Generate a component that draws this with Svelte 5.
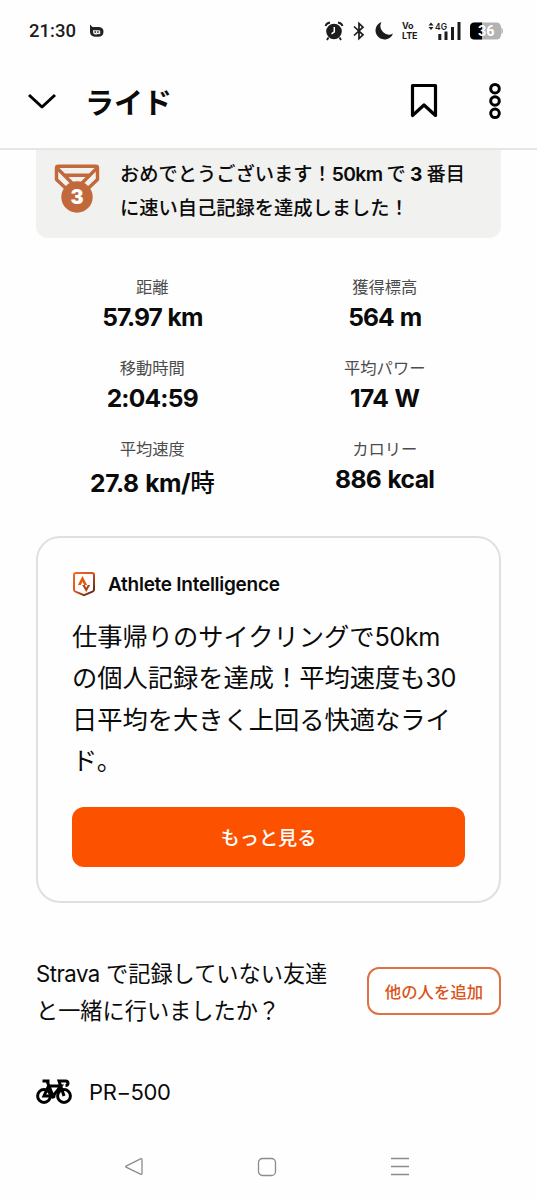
<script>
  const stats = [
    { label: '距離', value: '57.97 km', spacing: -1 },
    { label: '獲得標高', value: '564 m', spacing: -0.9 },
    { label: '移動時間', value: '2:04:59', spacing: -0.8 },
    { label: '平均パワー', value: '174 W', spacing: -0.6 },
    { label: '平均速度', value: '27.8 km/', unit: '時', spacing: -0.4 },
    { label: 'カロリー', value: '886 kcal', spacing: -0.6 },
  ];
</script>

<div class="screen">
  <div class="status">
    <span class="clock">21:30</span>
    <svg class="notif" width="16" height="14" viewBox="0 0 16 14">
      <path d="M1 0.5 L3.5 3 H10 Q14.500 3.500 14.500 7.500 Q14.500 12.800 9 12.800 H6 Q1 12.500 1 7.500 Z" fill="#222" />
      <path d="M4 6.200 H10 Q11.200 6.200 11.200 7.500 V10.500 H6 Q4 10.300 4 8 Z" fill="#eee" />
      <path d="M5.500 8 H7 M8.200 8 H9.700 M8 11 H12" stroke="#222" stroke-width="1.400" />
    </svg>
    <div class="indicators">
      <svg width="20" height="20" viewBox="0 0 20 20">
        <circle cx="10" cy="10.500" r="7.800" fill="#1c1c1c" />
        <path d="M1.500 5 Q2.500 2 6 1.500 M18.500 5 Q17.500 2 14 1.500 M4.500 16.500 L3 19 M15.500 16.500 L17 19" stroke="#1c1c1c" stroke-width="1.800" fill="none" />
        <path d="M10.300 6 V10.800 L7.500 12.800" stroke="#fff" stroke-width="1.500" fill="none" />
      </svg>
      <svg class="bluetooth" width="12" height="20" viewBox="0 0 12 20">
        <path d="M1 5.500 L10 13.800 L6 17.500 V2.500 L10 6.200 L1 14.500" stroke="#1c1c1c" stroke-width="1.700" fill="none" />
      </svg>
      <svg class="moon" width="20" height="20" viewBox="0 0 20 20">
        <path d="M7.500 1 A9 9 0 1 0 19 12.500 A8.500 8.500 0 0 1 7.500 1 Z" fill="#1c1c1c" />
      </svg>
      <div class="volte"><span>Vo</span><span>LTE</span></div>
      <svg class="signal" width="34" height="20" viewBox="0 0 34 20">
        <path d="M0.500 4.500 L3 1.500 L5.500 4.500 Z M0.500 6 L3 9 L5.500 6 Z" fill="#1c1c1c" />
        <text x="7" y="8.800" font-size="9.500" font-weight="600" textLength="12" lengthAdjust="spacingAndGlyphs" fill="#1c1c1c">4G</text>
        <path d="M11.800 13 V19 M18 10.500 V19 M24.500 6 V19 M31 1 V19" stroke="#1c1c1c" stroke-width="3" />
      </svg>
      <svg class="battery" width="34" height="18" viewBox="0 0 34 18">
        <rect x="0" y="0.500" width="31" height="17" rx="4.500" fill="#b3b3b3" />
        <path d="M12 0.500 H4.500 Q0 0.500 0 5 V13 Q0 17.500 4.500 17.500 H12 Z" fill="#000" />
        <path d="M31.300 5.500 Q33 6 33 9 Q33 12 31.300 12.500 Z" fill="#b3b3b3" />
        <text x="8" y="14" font-size="14" font-weight="700" textLength="16.500" lengthAdjust="spacingAndGlyphs" fill="#fff">36</text>
      </svg>
    </div>
  </div>

  <header>
    <svg class="chevron" width="30" height="18" viewBox="0 0 30 18">
      <path d="M2 3 L15 15 L28 3" stroke="#000" stroke-width="3" fill="none" stroke-linejoin="round" />
    </svg>
    <h1>ライド</h1>
    <svg class="bookmark" width="28" height="36" viewBox="0 0 28 36">
      <path d="M2.500 2.500 H25.500 V32.500 L14 22 L2.500 32.500 Z" stroke="#000" stroke-width="3.200" fill="none" stroke-linejoin="round" />
    </svg>
    <svg class="more" width="12" height="38" viewBox="0 0 12 38">
      <g fill="none" stroke="#000" stroke-width="3">
        <circle cx="6" cy="6.700" r="4.300" />
        <circle cx="6" cy="19" r="4.300" />
        <circle cx="6" cy="31.300" r="4.300" />
      </g>
    </svg>
  </header>

  <div class="banner">
    <svg class="medal" width="46" height="50" viewBox="0 0 46 50">
      <g fill="none" stroke="#c2693c" stroke-width="3.400" stroke-linejoin="round">
        <path d="M12 24.500 L2.500 15.500 V4 Q2.500 2.300 4.200 2.300 H41.800 Q43.500 2.300 43.500 4 V15.500 L34 24.500" />
        <path d="M2.500 3.500 L18 19 M43.500 3.500 L28 19 M10 11.200 H36" />
      </g>
      <circle cx="23" cy="33" r="15.700" fill="#c2693c" />
      <text x="23" y="40" text-anchor="middle" font-size="19.500" font-weight="900" fill="#fff">3</text>
    </svg>
    <p>おめでとうございます！<span class="latin">50km</span> で <b>3</b> 番目<br />に速い自己記録を達成しました！</p>
  </div>

  <div class="stats">
    {#each stats as stat}
      <div class="stat">
        <span class="label">{stat.label}</span>
        <strong class:tall={stat.unit} style="letter-spacing: {stat.spacing}px">{stat.value}{#if stat.unit}<span class="unit">{stat.unit}</span>{/if}</strong>
      </div>
    {/each}
  </div>

  <section class="card">
    <div class="card-head">
      <svg width="24" height="26" viewBox="0 0 24 26">
        <defs>
          <linearGradient id="badge" x1="0" y1="0" x2="1" y2="1">
            <stop offset="0" stop-color="#f26a25" />
            <stop offset="0.450" stop-color="#d9541c" />
            <stop offset="1" stop-color="#4a1c18" />
          </linearGradient>
        </defs>
        <path d="M4 2 H20 Q22 2 22 4 V18.500 Q22 20 20.500 20.700 L12 24.200 L3.500 20.700 Q2 20 2 18.500 V4 Q2 2 4 2 Z" fill="none" stroke="url(#badge)" stroke-width="2" />
        <path d="M5.900 14 L10.500 5 L15.100 14 H12.200 L10.500 10.700 L8.800 14 Z" fill="#e8590c" />
        <path d="M10.200 14 H12.700 L14.200 16.800 L15.700 14 H18.200 L14.200 21 Z" fill="#b5401a" />
      </svg>
      <h2>Athlete Intelligence</h2>
    </div>
    <p class="summary">仕事帰りのサイクリングで<span>50km</span><br />の個人記録を達成！平均速度も<span>30</span><br />日平均を大きく上回る快適なライ<br />ド。</p>
    <button class="primary">もっと見る</button>
  </section>

  <div class="friends">
    <p><span>Strava</span> で記録していない友達<br />と一緒に行いましたか？</p>
    <button class="outline">他の人を追加</button>
  </div>

  <div class="gear">
    <svg width="36" height="26" viewBox="0 0 36 26">
      <g fill="none" stroke="#000" stroke-width="3">
        <circle cx="8" cy="17" r="6.400" />
        <circle cx="28" cy="17" r="6.400" />
        <path d="M6.500 2 H13.500 M11 2 L17 17 L25 7 H12.500 L8 17 H17 M28 17 L23 2 H29.500 Q32 2 32 4.300 Q32 6.500 29.500 6.500" />
      </g>
      <circle cx="17" cy="17" r="2.500" />
    </svg>
    <span>PR−500</span>
  </div>

  <nav>
    <svg width="20" height="20" viewBox="0 0 20 20">
      <path d="M2 9.200 L16.500 1.800 Q18 1.200 18 2.800 V16.200 Q18 17.800 16.500 17.200 L2 10.200 Q1.200 9.700 2 9.200 Z" />
    </svg>
    <svg width="20" height="20" viewBox="0 0 20 20"><rect x="1.500" y="1.500" width="17" height="17" rx="4" /></svg>
    <svg width="20" height="20" viewBox="0 0 20 20"><path d="M1 1.500 H19 M1 9.500 H19 M1 17.500 H19" /></svg>
  </nav>
</div>

<style>
  :global(body) {
    margin: 0;
    background: #fefefe;
  }

  .screen {
    display: flex;
    flex-direction: column;
    width: 537px;
    height: 1199px;
    overflow: hidden;
    background: #fefefe;
    color: #0b0b0b;
    font-family: Inter, 'Noto Sans CJK JP', sans-serif;
  }

  svg {
    display: block;
    flex: none;
  }

  p, h1, h2 {
    margin: 0;
  }

  button {
    box-sizing: border-box;
    padding: 0;
    font-family: inherit;
  }

  .status {
    display: flex;
    align-items: center;
    height: 62px;
    padding: 0 33px 0 29px;
    color: #1c1c1c;
  }

  .clock {
    width: 60px;
    font-family: Roboto, sans-serif;
    font-size: 18.5px;
    font-weight: 500;
  }

  .indicators {
    display: flex;
    align-items: center;
    margin-left: auto;
  }

  .bluetooth {
    margin-left: 9px;
  }

  .moon {
    margin-left: 9px;
  }

  .volte {
    display: flex;
    flex-direction: column;
    width: 17px;
    margin-left: 8px;
    font-size: 9px;
    font-weight: 700;
    line-height: 10px;
    letter-spacing: -0.1px;
  }

  .signal {
    margin-left: 9px;
  }

  .battery {
    margin-left: 8px;
    font-family: Roboto, sans-serif;
  }

  header {
    display: flex;
    align-items: center;
    height: 88px;
    padding: 0 36px 0 27px;
    border-bottom: 2px solid #e6e6e6;
    box-sizing: border-box;
  }

  header svg {
    margin-top: -8px;
  }

  h1 {
    margin: -8px auto 0 28px;
    font-size: 29px;
    font-weight: 700;
  }

  .more {
    margin-left: 51px;
  }

  .banner {
    display: flex;
    box-sizing: border-box;
    height: 88px;
    margin: 0 36px;
    padding: 8px 0 0 18px;
    background: #f1f1ef;
    border-radius: 0 0 12px 12px;
  }

  .medal {
    margin-top: 6px;
  }

  .banner p {
    margin-left: 20px;
    font-size: 19.25px;
    font-weight: 500;
    line-height: 33.5px;
    white-space: nowrap;
    word-spacing: -1px;
  }

  .banner .latin {
    font-weight: 600;
    letter-spacing: -0.6px;
  }

  .stats {
    display: grid;
    grid-template-columns: 1fr 1fr;
    grid-auto-rows: 81px;
    margin: 37px 36px 0;
  }

  .stat {
    display: flex;
    flex-direction: column;
    align-items: center;
  }

  .label {
    font-size: 16.3px;
    line-height: 24px;
    color: #4c4c4c;
  }

  strong {
    font-size: 24.6px;
    font-weight: 700;
    line-height: 36px;
    white-space: nowrap;
    word-spacing: 1px;
  }

  strong.tall {
    line-height: 44px;
  }

  .unit {
    font-weight: 500;
  }

  .card {
    display: flex;
    flex-direction: column;
    box-sizing: border-box;
    height: 367px;
    margin: 18px 36px 0;
    padding: 32px 34px 0;
    border: 2px solid #e0e0e0;
    border-radius: 24px;
  }

  .card-head {
    display: flex;
    align-items: center;
    height: 28px;
  }

  h2 {
    margin-left: 12px;
    font-size: 19px;
    font-weight: 600;
    letter-spacing: -0.27px;
  }

  .summary {
    margin-top: 19px;
    font-size: 25.25px;
    line-height: 41.3px;
    white-space: nowrap;
  }

  .summary span {
    letter-spacing: -0.5px;
  }

  .primary {
    height: 60px;
    margin-top: 25px;
    border: 0;
    border-radius: 12px;
    background: #fc5200;
    color: #fff;
    font-size: 19.2px;
    font-weight: 500;
  }

  .friends {
    display: flex;
    justify-content: space-between;
    margin: 52px 36px 0;
  }

  .friends p {
    font-size: 22.2px;
    line-height: 37px;
    white-space: nowrap;
  }

  .friends p span {
    letter-spacing: -0.5px;
  }

  .outline {
    width: 134px;
    height: 48px;
    margin-top: 12px;
    border: 2px solid #dd7345;
    border-radius: 12px;
    background: #fff;
    color: #dc541a;
    font-size: 16.4px;
    font-weight: 500;
  }

  .gear {
    display: flex;
    align-items: center;
    height: 30px;
    margin: 48px 36px 0;
    font-size: 22px;
  }

  .gear span {
    margin-left: 17px;
    letter-spacing: -0.4px;
  }

  nav {
    display: flex;
    justify-content: space-between;
    margin: 50px 127px 0 124px;
  }

  nav svg {
    fill: none;
    stroke: #8c8c8c;
    stroke-width: 1.3;
  }
</style>
